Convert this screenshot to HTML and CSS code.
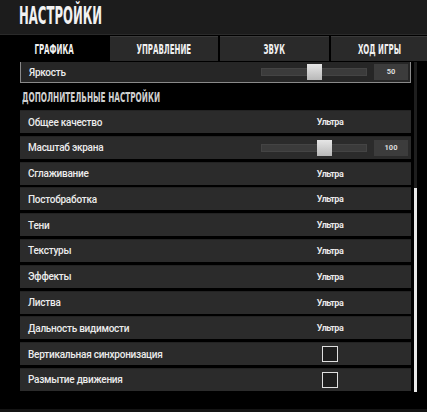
FILE: index.html
```html
<!DOCTYPE html>
<html lang="ru">
<head>
  <meta charset="UTF-8">
  <title>Настройки</title>
  <link rel="stylesheet" href="styles.css">
</head>
<body>
  <div class="header">
    <h1 class="title"><span>НАСТРОЙКИ</span></h1>
  </div>

  <div class="tabs">
    <div class="tab active"><span>ГРАФИКА</span></div>
    <div class="tab"><span>УПРАВЛЕНИЕ</span></div>
    <div class="tab"><span>ЗВУК</span></div>
    <div class="tab"><span>ХОД ИГРЫ</span></div>
  </div>

  <div class="panel">
    <div class="list">
      <div class="row partial">
        <span class="label">Яркость</span>
        <div class="control slider">
          <div class="track"><div class="thumb" style="left: 45px"></div></div>
          <div class="num">50</div>
        </div>
      </div>

      <div class="section-title"><span>ДОПОЛНИТЕЛЬНЫЕ НАСТРОЙКИ</span></div>

      <div class="row">
        <span class="label">Общее качество</span>
        <div class="control"><span class="value">Ультра</span></div>
      </div>
      <div class="row">
        <span class="label">Масштаб экрана</span>
        <div class="control slider">
          <div class="track"><div class="thumb" style="left: 55px"></div></div>
          <div class="num">100</div>
        </div>
      </div>
      <div class="row">
        <span class="label">Сглаживание</span>
        <div class="control"><span class="value">Ультра</span></div>
      </div>
      <div class="row">
        <span class="label">Постобработка</span>
        <div class="control"><span class="value">Ультра</span></div>
      </div>
      <div class="row">
        <span class="label">Тени</span>
        <div class="control"><span class="value">Ультра</span></div>
      </div>
      <div class="row">
        <span class="label">Текстуры</span>
        <div class="control"><span class="value">Ультра</span></div>
      </div>
      <div class="row">
        <span class="label">Эффекты</span>
        <div class="control"><span class="value">Ультра</span></div>
      </div>
      <div class="row">
        <span class="label">Листва</span>
        <div class="control"><span class="value">Ультра</span></div>
      </div>
      <div class="row">
        <span class="label">Дальность видимости</span>
        <div class="control"><span class="value">Ультра</span></div>
      </div>
      <div class="row">
        <span class="label">Вертикальная синхронизация</span>
        <div class="control"><span class="checkbox"></span></div>
      </div>
      <div class="row">
        <span class="label">Размытие движения</span>
        <div class="control"><span class="checkbox"></span></div>
      </div>
    </div>

    <div class="scrollbar">
      <div class="scroll-thumb"></div>
    </div>
  </div>

  <div class="footer"></div>
</body>
</html>
```

FILE: styles.css
```css
body {
  margin: 0;
  background-color: #000;
  color: #e6e6e6;
  font-family: Roboto, "Liberation Sans", sans-serif;
  width: 427px;
  height: 412px;
  overflow: hidden;
}

.header {
  height: 34px;
  background-color: #1c1c1c;
  border-bottom: 1px solid #2a2a2a;
}
.title {
  margin: 0;
  padding: 3px 0 0 19px;
  font-family: "DejaVu Sans Condensed", "DejaVu Sans", sans-serif;
  font-stretch: condensed;
  font-size: 25px;
  font-weight: bold;
  line-height: 26px;
  color: #f2f2f2;
}
.title span {
  display: inline-block;
  transform: scaleX(0.52);
  transform-origin: left center;
}

.tabs {
  display: grid;
  grid-template-columns: 108px 108px 109px 1fr;
  gap: 2px;
  margin-top: 1px;
  height: 25px;
}
.tab {
  display: flex;
  align-items: center;
  justify-content: center;
  background-color: #2a2a2a;
  border-top: 1px solid #3a3a3a;
  font-family: "DejaVu Sans Condensed", "DejaVu Sans", sans-serif;
  font-stretch: condensed;
  font-size: 14px;
  font-weight: bold;
  color: #f0f0f0;
}
.tab span {
  display: inline-block;
  transform: scaleX(0.56);
}
.tab.active {
  background-color: #000;
  border-top-color: #000;
}

.panel {
  display: flex;
  margin-top: 1px;
}
.list {
  width: 391px;
  margin-left: 20px;
}

.row {
  display: flex;
  align-items: center;
  justify-content: space-between;
  height: 23px;
  margin-bottom: 2.8px;
  background-color: #2b2b2b;
  border-top: 1px solid #232323;
  box-sizing: border-box;
}
.row.partial {
  height: 21px;
  margin-bottom: 0;
  border: 1px solid #8a8a8a;
  border-top: none;
  background-color: #262626;
}
.label {
  padding-left: 8px;
  font-size: 10px;
  font-weight: 500;
  letter-spacing: -0.25px;
  color: #ececec;
}

.control {
  display: flex;
  align-items: center;
  justify-content: center;
  width: 138px;
  margin-right: 12px;
}
.value {
  font-size: 9px;
  font-weight: bold;
  letter-spacing: -0.5px;
  color: #e8e8e8;
}

.slider {
  justify-content: flex-start;
  width: 147px;
  margin-right: 3px;
  gap: 7px;
}
.row.partial .slider {
  margin-right: 2px;
}
.track {
  position: relative;
  width: 106px;
  height: 8px;
  background-color: #3b3b3b;
  border: 1px solid #444;
  box-sizing: border-box;
}
.thumb {
  position: absolute;
  top: -5px;
  width: 15px;
  height: 16px;
  background: linear-gradient(#e6e6e6, #b8b8b8);
}
.num {
  width: 34px;
  height: 16px;
  line-height: 16px;
  text-align: center;
  background-color: #3c3c3c;
  font-size: 7.5px;
  font-weight: bold;
  color: #dcdcdc;
}

.checkbox {
  display: block;
  width: 14px;
  height: 14px;
  border: 1.5px solid #e0e0e0;
  background-color: #1e1e1e;
}

.section-title {
  height: 27px;
  line-height: 29px;
  padding-left: 2px;
  font-family: "DejaVu Sans Condensed", "DejaVu Sans", sans-serif;
  font-stretch: condensed;
  font-size: 14px;
  font-weight: bold;
  color: #cfcfcf;
}
.section-title span {
  display: inline-block;
  transform: scaleX(0.58);
  transform-origin: left center;
}

.scrollbar {
  position: relative;
  width: 3px;
  height: 330px;
  margin-left: 3px;
  background-color: #1e1e1e;
}
.scroll-thumb {
  position: absolute;
  left: 0;
  right: 0;
  top: 126px;
  bottom: 0;
  background-color: #e8e8e8;
}

.footer {
  height: 4px;
  margin-top: 15px;
  background-color: #141414;
}
```
